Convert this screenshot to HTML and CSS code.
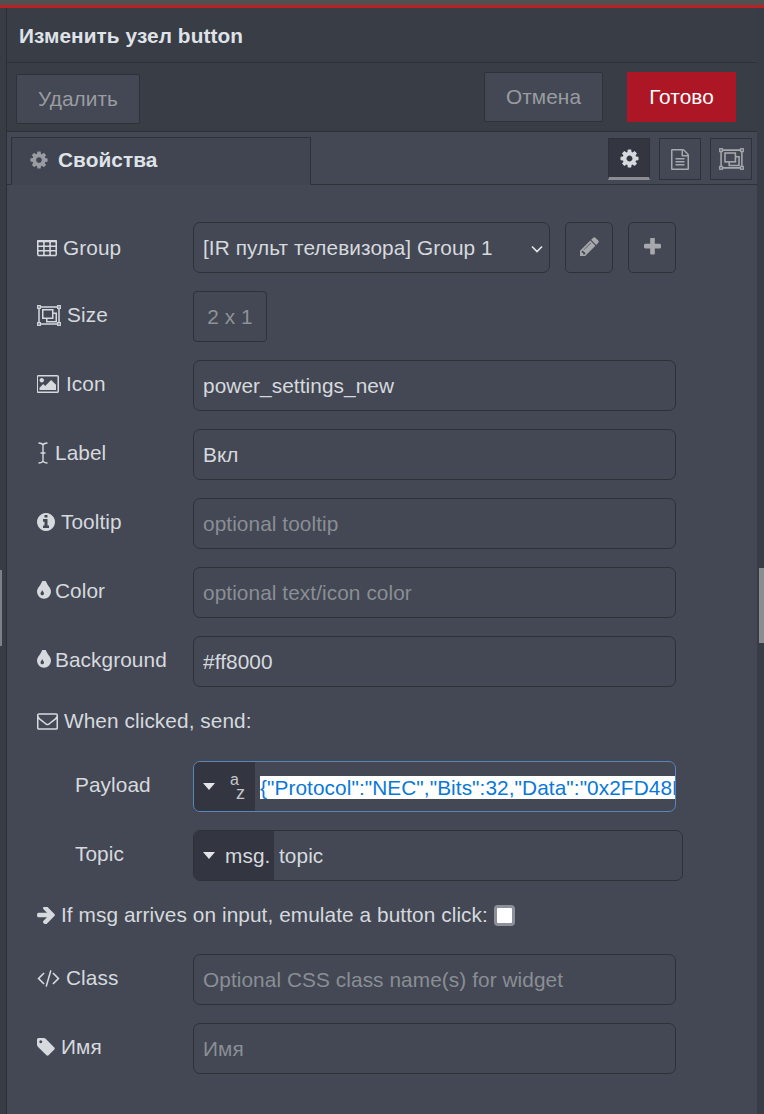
FILE: index.html
```html
<!DOCTYPE html>
<html lang="ru">
<head>
<meta charset="utf-8">
<title>Изменить узел button</title>
<link rel="stylesheet" href="styles.css">
</head>
<body>
<svg class="defs" width="0" height="0">
  <symbol id="i-cog" viewBox="0 0 1792 1792"><path d="M1152 896q0-106-75-181t-181-75-181 75-75 181 75 181 181 75 181-75 75-181zm512-109v222q0 12-8 23t-20 13l-185 28q-19 54-39 91 35 50 107 138 10 12 10 25t-9 23q-27 37-99 108t-94 71q-12 0-26-9l-138-108q-44 23-91 38-16 136-29 186-7 28-36 28h-222q-14 0-24.5-8.5t-11.5-21.5l-28-184q-49-16-90-37l-141 107q-10 9-25 9-14 0-25-11-126-114-165-168-7-10-7-23 0-12 8-23 15-21 51-66.5t54-70.5q-27-50-41-99l-183-27q-13-2-21-12.5t-8-23.5v-222q0-12 8-23t19-13l186-28q14-46 39-92-40-57-107-138-10-12-10-24 0-10 9-23 26-36 98.5-107.5t94.5-71.5q13 0 26 10l138 107q44-23 91-38 16-136 29-186 7-28 36-28h222q14 0 24.5 8.5t11.5 21.5l28 184q49 16 90 37l142-107q9-9 24-9 13 0 25 10 129 119 165 170 7 8 7 22 0 12-8 23-15 21-51 66.5t-54 70.5q26 50 41 98l183 28q13 2 21 12.5t8 23.5z"/></symbol>
  <symbol id="i-tint" viewBox="384 256 1024 1280"><path d="M896 1152q0-36-20-69-1-1-15.5-22.5t-25.5-38-25-44-21-50.5q-4-16-21-16t-21 16q-7 23-21 50.5t-25 44-25.5 38-15.5 22.5q-20 33-20 69 0 53 37.5 90.5t90.5 37.5 90.5-37.5 37.5-90.5zm512-128q0 212-150 362t-362 150-362-150-150-362q0-145 81-275 6-9 62.5-90.5t101-151 99.5-178 83-201.5q9-30 34-47t51-17 51.5 17 33.5 47q28 93 83 201.5t99.5 178 101 151 62.5 90.5q81 127 81 275z"/></symbol>
  <symbol id="i-info" viewBox="128 128 1536 1536"><path d="M1152 1376v-160q0-14-9-23t-23-9h-96v-512q0-14-9-23t-23-9h-320q-14 0-23 9t-9 23v160q0 14 9 23t23 9h96v320h-96q-14 0-23 9t-9 23v160q0 14 9 23t23 9h448q14 0 23-9t9-23zm-128-896v-160q0-14-9-23t-23-9h-192q-14 0-23 9t-9 23v160q0 14 9 23t23 9h192q14 0 23-9t9-23zm640 416q0 209-103 385.500t-279.500 279.500-385.500 103-385.500-103-279.500-279.500-103-385.500 103-385.500 279.500-279.500 385.500-103 385.500 103 279.500 279.500 103 385.500z"/></symbol>
  <symbol id="i-arrow" viewBox="128 192 1472 1408"><path d="M1600 960q0 54-37 91l-651 651q-39 37-91 37-51 0-90-37l-75-75q-38-38-38-91t38-91l293-293h-704q-52 0-84.5-37.5t-32.5-90.5v-128q0-53 32.5-90.5t84.5-37.5h704l-293-294q-38-36-38-90t38-90l75-75q38-38 90-38 53 0 91 38l651 651q37 35 37 90z" transform="translate(0 -104)"/></symbol>
  <symbol id="i-tag" viewBox="128 128 1536 1536"><path d="M576 448q0-53-37.5-90.5t-90.5-37.5-90.5 37.5-37.5 90.5 37.5 90.5 90.5 37.5 90.5-37.5 37.5-90.5zm1067 576q0 53-37 90l-491 492q-39 37-91 37-53 0-90-37l-715-716q-38-37-64.5-101t-26.5-117v-416q0-52 38-90t90-38h416q53 0 117 26.5t102 64.5l715 714q37 39 37 91z"/></symbol>
  <symbol id="i-pencil" viewBox="128 128 1536 1536"><path d="M491 1536l91-91-235-235-91 91v107h128v128h107zm523-928q0-22-22-22-10 0-17 7l-542 542q-7 7-7 17 0 22 22 22 10 0 17-7l542-542q7-7 7-17zm-54-192l416 416-832 832h-416v-416zm683 96q0 53-37 90l-166 166-416-416 166-165q36-38 90-38 53 0 91 38l235 234q37 39 37 91z"/></symbol>
  <symbol id="i-plus" viewBox="192 192 1408 1408"><path d="M1600 736v192q0 40-28 68t-68 28h-416v416q0 40-28 68t-68 28h-192q-40 0-68-28t-28-68v-416h-416q-40 0-68-28t-28-68v-192q0-40 28-68t68-28h416v-416q0-40 28-68t68-28h192q40 0 68 28t28 68v416h416q40 0 68 28t28 68z" transform="translate(0 32)"/></symbol>
  <symbol id="i-table" viewBox="64 192 1664 1408"><path d="M576 1376v-192q0-14-9-23t-23-9h-320q-14 0-23 9t-9 23v192q0 14 9 23t23 9h320q14 0 23-9t9-23zm0-384v-192q0-14-9-23t-23-9h-320q-14 0-23 9t-9 23v192q0 14 9 23t23 9h320q14 0 23-9t9-23zm512 384v-192q0-14-9-23t-23-9h-320q-14 0-23 9t-9 23v192q0 14 9 23t23 9h320q14 0 23-9t9-23zm-512-768v-192q0-14-9-23t-23-9h-320q-14 0-23 9t-9 23v192q0 14 9 23t23 9h320q14 0 23-9t9-23zm512 384v-192q0-14-9-23t-23-9h-320q-14 0-23 9t-9 23v192q0 14 9 23t23 9h320q14 0 23-9t9-23zm512 384v-192q0-14-9-23t-23-9h-320q-14 0-23 9t-9 23v192q0 14 9 23t23 9h320q14 0 23-9t9-23zm-512-768v-192q0-14-9-23t-23-9h-320q-14 0-23 9t-9 23v192q0 14 9 23t23 9h320q14 0 23-9t9-23zm512 384v-192q0-14-9-23t-23-9h-320q-14 0-23 9t-9 23v192q0 14 9 23t23 9h320q14 0 23-9t9-23zm0-384v-192q0-14-9-23t-23-9h-320q-14 0-23 9t-9 23v192q0 14 9 23t23 9h320q14 0 23-9t9-23zm128-320v1088q0 66-47 113t-113 47h-1344q-66 0-113-47t-47-113v-1088q0-66 47-113t113-47h1344q66 0 113 47t47 113z"/></symbol>
  <symbol id="i-pic" viewBox="0 128 1920 1536"><path d="M576 576q0 80-56 136t-136 56-136-56-56-136 56-136 136-56 136 56 56 136zm1024 384v448h-1408v-192l320-320 160 160 512-512zm96-704h-1600q-13 0-22.5 9.5t-9.5 22.5v1216q0 13 9.5 22.5t22.5 9.5h1600q13 0 22.5-9.5t9.5-22.5v-1216q0-13-9.5-22.5t-22.5-9.5zm160 32v1216q0 66-47 113t-113 47h-1600q-66 0-113-47t-47-113v-1216q0-66 47-113t113-47h1600q66 0 113 47t47 113z"/></symbol>
  <symbol id="i-env" viewBox="0 256 1792 1408"><path d="M1664 1504v-768q-32 36-69 66-268 206-426 338-51 43-83 67t-86.5 48.5-102.5 24.5h-2q-48 0-102.5-24.5t-86.5-48.5-83-67q-158-132-426-338-37-30-69-66v768q0 13 9.5 22.5t22.5 9.5h1472q13 0 22.5-9.5t9.5-22.5zm0-1051v-24.5l-.5-13-3-12.5-5.5-9-9-7.5-14-2.5h-1472q-13 0-22.5 9.5t-9.5 22.5q0 168 147 284 193 152 401 317 6 5 35 29.5t46 37.5 44.5 31.5 50.5 27.5 43 9h2q20 0 43-9t50.5-27.5 44.5-31.5 46-37.5 35-29.5q208-165 401-317 54-43 100.5-115.5t46.5-131.5zm128-37v1088q0 66-47 113t-113 47h-1472q-66 0-113-47t-47-113v-1088q0-66 47-113t113-47h1472q66 0 113 47t47 113z"/></symbol>
  <symbol id="i-code" viewBox="0 256 1920 1408"><path d="M617 1399l-50 50q-10 10-23 10t-23-10l-466-466q-10-10-10-23t10-23l466-466q10-10 23-10t23 10l50 50q10 10 10 23t-10 23l-393 393 393 393q10 10 10 23t-10 23zm591-1067l-373 1291q-4 13-15.5 19.5t-23.5 2.5l-62-17q-13-4-19.5-15.5t-2.5-24.5l373-1291q4-13 15.5-19.5t23.5-2.5l62 17q13 4 19.5 15.5t2.5 24.5zm657 651l-466 466q-10 10-23 10t-23-10l-50-50q-10-10-10-23 0-12 10-23l393-393-393-393q-10-10-10-23t10-23l50-50q10-10 23-10t23 10l466 466q10 10 10 23t-10 23z"/></symbol>
  <symbol id="i-file" viewBox="128 0 1536 1792"><path d="M1596 380q28 28 48 76t20 88v1152q0 40-28 68t-68 28h-1344q-40 0-68-28t-28-68v-1600q0-40 28-68t68-28h896q40 0 88 20t76 48zm-444-244v376h376q-10-29-22-41l-313-313q-12-12-41-22zm384 1528v-1024h-416q-40 0-68-28t-28-68v-416h-768v1536h1280zm-1024-864q0-14 9-23t23-9h704q14 0 23 9t9 23v64q0 14-9 23t-23 9h-704q-14 0-23-9t-9-23v-64zm736 224q14 0 23 9t9 23v64q0 14-9 23t-23 9h-704q-14 0-23-9t-9-23v-64q0-14 9-23t23-9h704zm0 256q14 0 23 9t9 23v64q0 14-9 23t-23 9h-704q-14 0-23-9t-9-23v-64q0-14 9-23t23-9h704z"/></symbol>
  <symbol id="i-group" viewBox="0 0 24 21"><g fill="none" stroke="currentColor" stroke-width="1.500"><path d="M3 2h18M3 19h18M2 3v15M22 3v15"/><rect x="5.750" y="4.750" width="10" height="8.500"/><path d="M15.750 8.250h3.500v8.500h-9.500v-3.500"/></g><g fill="none" stroke="currentColor" stroke-width="1.300"><rect x=".7" y=".7" width="2.600" height="2.600"/><rect x="20.700" y=".7" width="2.600" height="2.600"/><rect x=".7" y="17.700" width="2.600" height="2.600"/><rect x="20.700" y="17.700" width="2.600" height="2.600"/></g></symbol>
  <symbol id="i-cursor" viewBox="0 0 12 22"><path d="M1.500 1c2.500 0 3.800.6 4.500 2 .7-1.400 2-2 4.500-2M1.500 21c2.500 0 3.800-.6 4.500-2 .7 1.400 2 2 4.500 2M6 3v16M3.500 11h5" fill="none" stroke="currentColor" stroke-width="1.400"/></symbol>
</svg>

<div class="top-strip"></div>
<div class="shell">
  <div class="gutter-left"><div class="gutter-thumb"></div></div>
  <main class="tray">
    <header class="tray-title">Изменить узел button</header>
    <div class="tray-actions">
      <button class="btn btn-delete">Удалить</button>
      <div class="actions-right">
        <button class="btn btn-cancel">Отмена</button>
        <button class="btn btn-done">Готово</button>
      </div>
    </div>
    <div class="tabs">
      <div class="tab"><svg class="tab-icon"><use href="#i-cog"/></svg><span>Свойства</span></div>
      <div class="tab-tools">
        <div class="tool tool-active"><svg class="tool-cog"><use href="#i-cog"/></svg></div>
        <div class="tool"><svg class="tool-file"><use href="#i-file"/></svg></div>
        <div class="tool"><svg class="tool-group"><use href="#i-group"/></svg></div>
      </div>
    </div>

    <form class="form">
      <div class="row row-group">
        <label class="lbl lbl-group"><svg class="ic ic-table"><use href="#i-table"/></svg>Group</label>
        <div class="field field-select">[IR пульт телевизора] Group 1
          <svg class="chev" viewBox="0 0 12 8"><path d="M1 1.500l5 5 5-5" fill="none" stroke="currentColor" stroke-width="1.700"/></svg>
        </div>
        <div class="icon-btn"><svg class="ic-pencil"><use href="#i-pencil"/></svg></div>
        <div class="icon-btn"><svg class="ic-plus"><use href="#i-plus"/></svg></div>
      </div>
      <div class="row">
        <label class="lbl"><svg class="ic ic-group"><use href="#i-group"/></svg>Size</label>
        <div class="field field-size">2 x 1</div>
      </div>
      <div class="row">
        <label class="lbl"><svg class="ic ic-pic"><use href="#i-pic"/></svg>Icon</label>
        <input class="field" value="power_settings_new">
      </div>
      <div class="row">
        <label class="lbl"><svg class="ic ic-cursor"><use href="#i-cursor"/></svg>Label</label>
        <input class="field" value="Вкл">
      </div>
      <div class="row">
        <label class="lbl"><svg class="ic ic-info"><use href="#i-info"/></svg>Tooltip</label>
        <input class="field" placeholder="optional tooltip">
      </div>
      <div class="row">
        <label class="lbl"><svg class="ic ic-tint"><use href="#i-tint"/></svg>Color</label>
        <input class="field" placeholder="optional text/icon color">
      </div>
      <div class="row">
        <label class="lbl"><svg class="ic ic-tint"><use href="#i-tint"/></svg>Background</label>
        <input class="field" value="#ff8000">
      </div>
      <div class="line line-send"><svg class="ic ic-env"><use href="#i-env"/></svg>When clicked, send:</div>
      <div class="row">
        <label class="lbl lbl-sub">Payload</label>
        <div class="typed typed-focus">
          <div class="type-btn type-btn-az">
            <span class="caret"></span>
            <span class="az"><span class="az-a">a</span><span class="az-z">z</span></span>
          </div>
          <div class="typed-value"><span class="selected">{"Protocol":"NEC","Bits":32,"Data":"0x2FD48B7"}</span></div>
        </div>
      </div>
      <div class="row">
        <label class="lbl lbl-sub">Topic</label>
        <div class="typed typed-topic">
          <div class="type-btn type-btn-msg"><span class="caret"></span><span class="msg">msg.</span></div>
          <div class="typed-value">topic</div>
        </div>
      </div>
      <div class="line line-check"><svg class="ic ic-arrow"><use href="#i-arrow"/></svg>If msg arrives on input, emulate a button click:<span class="checkbox"></span></div>
      <div class="row">
        <label class="lbl"><svg class="ic ic-code"><use href="#i-code"/></svg>Class</label>
        <input class="field" placeholder="Optional CSS class name(s) for widget">
      </div>
      <div class="row">
        <label class="lbl"><svg class="ic ic-tag"><use href="#i-tag"/></svg>Имя</label>
        <input class="field" placeholder="Имя">
      </div>
    </form>
  </main>
  <div class="gutter-right"><div class="scroll-thumb"></div></div>
</div>
</body>
</html>
```
FILE: styles.css
```css
* { box-sizing: border-box; letter-spacing: .08px; }
html, body { margin: 0; height: 100%; overflow: hidden; }
body {
  width: 764px;
  height: 1114px;
  background: #383c45;
  font-family: "Liberation Sans", Arial, sans-serif;
  font-size: 20.8px;
  color: #d6d9de;
  display: flex;
  flex-direction: column;
}
.defs { position: absolute; }
svg { fill: currentColor; display: block; flex: none; }

.top-strip {
  height: 8px;
  flex: none;
  background: #505050;
  border-bottom: 3px solid #b92127;
}
.shell { flex: 1; display: flex; min-height: 0; }
.gutter-left {
  width: 7px;
  flex: none;
  background: #383c45;
  border-right: 1px solid #2b2e35;
  padding-top: 562px;
}
.gutter-thumb { width: 2px; height: 76px; background: #7e8188; }
.gutter-right {
  width: 7px;
  flex: none;
  background: #383c45;
  padding: 560px 0 0 2px;
}
.scroll-thumb { width: 5px; height: 75px; background: #8b8d91; }

.tray { flex: 1; min-width: 0; background: #434854; display: flex; flex-direction: column; }
.tray-title {
  height: 55px;
  flex: none;
  background: #393d46;
  border-bottom: 1px solid #2e3138;
  padding: 17px 0 0 12px;
  font-size: 20.8px;
  line-height: 22px;
  font-weight: 700;
  color: #dfe2e7;
}
.tray-actions {
  height: 69px;
  flex: none;
  display: flex;
  justify-content: space-between;
  align-items: flex-start;
  padding: 9px 21px 0 9px;
  background: #393d46;
  border-bottom: 1px solid #2e3138;
}
.actions-right { display: flex; gap: 24px; }
.btn {
  height: 50px;
  font: 20.8px "Liberation Sans", Arial, sans-serif;
  border: 1px solid #2e3138;
  border-radius: 2px;
  background: #434854;
  color: #9a9ca1;
  padding: 0;
}
.btn-delete { width: 124px; margin-top: 2px; }
.btn-cancel { width: 119px; }
.btn-done { width: 109px; background: #ad1625; border-color: #ad1625; color: #fff; border-radius: 0; }

.tabs {
  height: 53px;
  flex: none;
  display: flex;
  justify-content: space-between;
  align-items: flex-start;
  padding: 5px 5px 0 4px;
  border-bottom: 1px solid #2e3138;
}
.tab {
  width: 300px;
  height: 48px;
  display: flex;
  align-items: center;
  padding: 0 0 2px 17px;
  gap: 9px;
  background: #404551;
  border: 1px solid #2e3138;
  border-bottom: 1px solid #404551;
  font-weight: 700;
  color: #dfe2e7;
}
.tab-icon { width: 20px; height: 20px; color: #9a9ca1; }
.tab-tools { display: flex; gap: 9px; padding-top: 1px; }
.tool {
  width: 42px;
  height: 42px;
  border: 1px solid #2e3138;
  display: flex;
  align-items: center;
  justify-content: center;
  color: #a6a8ac;
}
.tool-active {
  background: #333640;
  border-bottom: 3px solid #8b8d91;
  color: #d6d9de;
}
.tool-cog { width: 21px; height: 21px; }
.tool-file { width: 18px; height: 21px; }
.tool-group { width: 25px; height: 22px; }

.form { padding: 37px 0 0 30px; background: #434854; flex: 1; }
.row { display: flex; height: 51px; margin-bottom: 18px; align-items: flex-start; }
.lbl {
  width: 156px;
  flex: none;
  display: flex;
  align-items: center;
  gap: 6px;
  height: 24px;
  line-height: 24px;
  margin-top: 12px;
  color: #d6d9de;
}
.lbl-group { margin-top: 14px; }
.lbl-sub { padding-left: 38px; }
.ic { color: #d6d9de; }
.ic-table { width: 20px; height: 17px; }
.ic-group { width: 24px; height: 21px; }
.ic-pic { width: 23px; height: 18px; }
.ic-cursor { width: 12px; height: 22px; }
.ic-info { width: 18px; height: 18px; }
.ic-tint { width: 14px; height: 18px; margin: -2px -2px 0 0; }
.ic-env { width: 21px; height: 17px; }
.ic-arrow { width: 18px; height: 17px; }
.ic-code { width: 23px; height: 17px; }
.ic-tag { width: 18px; height: 18px; }

.field {
  width: 483px;
  height: 51px;
  flex: none;
  background: #434854;
  border: 1px solid #2e3138;
  border-radius: 7px;
  padding: 1px 9px 0;
  font: 20.8px "Liberation Sans", Arial, sans-serif;
  color: #d6d9de;
  outline: none;
}
.field::placeholder { color: #8a8e95; opacity: 1; }
.field-select {
  width: 357px;
  display: flex;
  align-items: center;
  justify-content: space-between;
  padding: 0 6px 0 9px;
}
.chev { width: 12px; height: 8px; color: #e4e5e8; margin-top: 2px; }
.field-size {
  width: 74px;
  display: flex;
  align-items: center;
  justify-content: center;
  border-radius: 4px;
  padding: 1px 0 0;
  color: #8f9298;
}
.icon-btn {
  width: 48px;
  height: 51px;
  flex: none;
  margin-left: 15px;
  padding-bottom: 2px;
  border: 1px solid #2e3138;
  border-radius: 5px;
  display: flex;
  align-items: center;
  justify-content: center;
  color: #a6a8ac;
}
.ic-pencil { width: 19px; height: 19px; }
.ic-plus { width: 17px; height: 17px; }

.line { display: flex; align-items: center; gap: 6px; height: 24px; color: #d6d9de; }
.line-send { margin: 22px 0 28px; }
.line-check { margin: 22px 0 27px; }

.typed {
  width: 483px;
  height: 51px;
  flex: none;
  display: flex;
  border: 1px solid #2e3138;
  border-radius: 7px;
  overflow: hidden;
}
.typed-focus { border-color: #5a85bb; }
.typed-topic { width: 490px; }
.type-btn {
  flex: none;
  height: 100%;
  background: #333640;
  display: flex;
  align-items: center;
  color: #d6d9de;
  padding-left: 9px;
}
.type-btn-az { width: 61px; }
.type-btn-msg { width: 80px; }
.caret {
  width: 0;
  height: 0;
  border: 6.500px solid transparent;
  border-top: 7px solid #e4e5e8;
  border-bottom: 0;
  flex: none;
}
.msg { margin-left: 10px; color: #d6d9de; }
.az { position: relative; width: 24px; height: 30px; margin-left: 9px; font-size: 16px; color: #c4c6ca; }
.az-a { position: absolute; left: 6px; top: -1px; }
.az-z { position: absolute; left: 12px; top: 11px; font-size: 18px; }
.typed-value {
  flex: 1;
  min-width: 0;
  overflow: hidden;
  white-space: nowrap;
  display: flex;
  align-items: center;
  padding: 1px 0 0 5px;
  color: #d6d9de;
}
.selected { background: #fff; color: #0a78d6; line-height: 23px; }
.checkbox {
  width: 21px;
  height: 21px;
  flex: none;
  background: #fff;
  border: 3px solid #8e9099;
  border-radius: 4px;
}
```
